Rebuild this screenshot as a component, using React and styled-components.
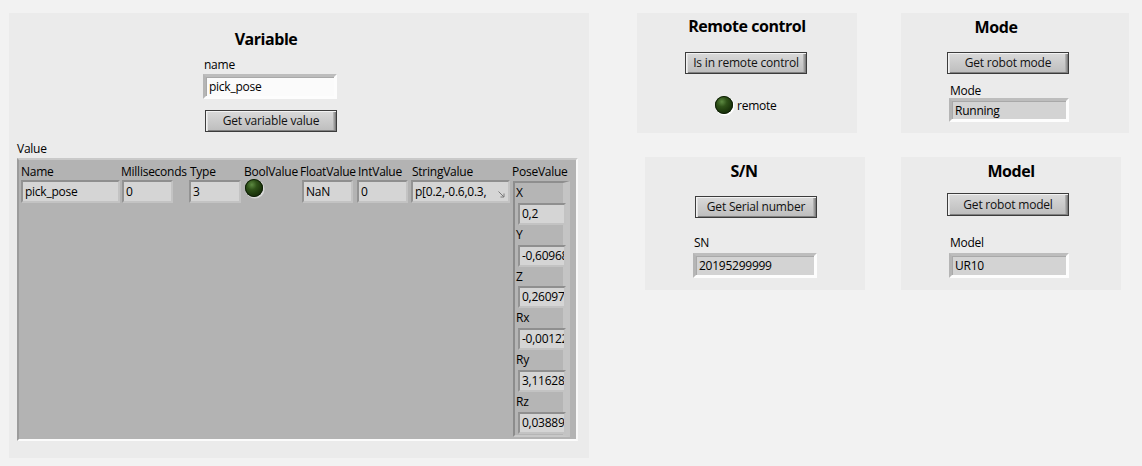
import React from 'react';
import styled, { createGlobalStyle } from 'styled-components';

const Global = createGlobalStyle`
  html, body { margin: 0; padding: 0; background: #f2f2f2; }
  body {
    font-family: "Open Sans", "Noto Sans", sans-serif;
    font-size: 12px;
    letter-spacing: -0.25px;
    color: #000;
  }
`;

const Page = styled.div`
  display: flex;
  align-items: flex-start;
  width: 1142px;
  height: 466px;
  box-sizing: border-box;
  padding: 13px 0 0 9px;
  background: #f2f2f2;
  overflow: hidden;
`;

const Card = styled.section`
  flex: none;
  display: flex;
  flex-direction: column;
  align-items: flex-start;
  box-sizing: border-box;
  width: ${p => p.$w}px;
  height: ${p => p.$h}px;
  margin-left: ${p => p.$ml || 0}px;
  padding-left: ${p => p.$pl || 0}px;
  background: #ebebeb;
`;

const Stack = styled.div`
  display: flex;
  flex-direction: column;
  align-items: flex-start;
  width: ${p => p.$w}px;
  margin-left: ${p => p.$ml || 0}px;
`;

const Title = styled.h2`
  align-self: stretch;
  margin: ${p => p.$mt || 0}px 0 0 0;
  box-sizing: border-box;
  ${p => (p.$dx > 0 ? `padding-left: ${2 * p.$dx}px;` : `padding-right: ${-2 * (p.$dx || 0)}px;`)}
  font-size: 16px;
  line-height: 20px;
  font-weight: 700;
  letter-spacing: -0.45px;
  text-align: center;
  white-space: nowrap;
`;

const Label = styled.div`
  margin-top: ${p => p.$mt || 0}px;
  margin-left: ${p => p.$ml || 0}px;
  line-height: 16px;
  white-space: nowrap;
`;

const Button = styled.button`
  flex: none;
  width: ${p => p.$w}px;
  height: ${p => p.$h || 22}px;
  margin-top: ${p => p.$mt || 0}px;
  margin-left: ${p => p.$ml || 0}px;
  padding: 0;
  box-sizing: border-box;
  border: 1px solid #3c3c3c;
  background: linear-gradient(#dadada, #cbcbcb 50%, #bdbdbd);
  box-shadow:
    inset 1px 1px 0 #f2f2f2,
    inset 2px 0 0 #e2e2e2,
    inset -1px -1px 0 #808080,
    inset -2px 0 0 #999,
    inset -3px 0 0 #b0b0b0;
  font-family: inherit;
  font-size: 12px;
  letter-spacing: -0.2px;
  line-height: 18px;
  color: #111;
  white-space: nowrap;
`;

const Display = styled.div`
  flex: none;
  display: flex;
  align-items: center;
  box-sizing: border-box;
  width: ${p => p.$w}px;
  height: ${p => p.$h || 24}px;
  margin-top: ${p => p.$mt || 0}px;
  margin-left: ${p => p.$ml || 0}px;
  padding-left: 3px;
  background: ${p => (p.$control ? '#fbfbfb' : '#d3d3d3')};
  border-style: solid;
  border-width: 3px;
  border-color: #bdbdbd #fdfdfd #fdfdfd #b5b5b5;
  box-shadow: inset 1px 1px 0 #a9a9a9;
  white-space: nowrap;
`;

const Cluster = styled.div`
  flex: none;
  display: flex;
  align-items: flex-start;
  box-sizing: border-box;
  width: 561px;
  height: 283px;
  margin: 1px 0 0 8px;
  padding: 4px 0 0 2px;
  background: #b3b3b3;
  border-style: solid;
  border-width: 2px;
  border-color: #c9c9c9 #f8f8f8 #fbfbfb #9c9c9c;
`;

const Column = styled.div`
  flex: none;
  display: flex;
  flex-direction: column;
  align-items: flex-start;
  width: ${p => p.$w}px;
`;

const ColLabel = styled.div`
  margin-left: ${p => p.$ml || 0}px;
  line-height: 16px;
  height: 16px;
  white-space: nowrap;
`;

const Cell = styled.div`
  position: relative;
  flex: none;
  box-sizing: border-box;
  width: ${p => p.$w}px;
  height: ${p => p.$h || 23}px;
  margin-left: ${p => p.$ml || 0}px;
  padding-left: 2px;
  background: #d5d5d5;
  border-style: solid;
  border-width: 2px;
  border-color: #8f8f8f #c3c3c3 #c3c3c3 #939393;
  line-height: ${p => (p.$h || 23) - 4}px;
  white-space: nowrap;
  overflow: hidden;
`;

const Led = styled.div`
  flex: none;
  width: 18px;
  height: 18px;
  margin-top: ${p => p.$mt || 0}px;
  margin-left: ${p => p.$ml || 0}px;
  border-radius: 50%;
  background: radial-gradient(circle at 38% 32%, #5d8a42 0%, #2f5219 30%, #1c360c 62%, #102206 100%);
  box-shadow: inset 0 0 0 1px #0f1f07, 1px 1px 0 0.5px ${p => p.$rim || '#ffffff'};
`;

const LedRow = styled.div`
  display: flex;
  align-items: center;
  gap: 4px;
  margin-top: ${p => p.$mt || 0}px;
  margin-left: ${p => p.$ml || 0}px;
`;

const Resize = styled.svg`
  position: absolute;
  right: 3px;
  bottom: 3px;
`;

const PoseCluster = styled.div`
  flex: none;
  display: flex;
  flex-direction: column;
  box-sizing: border-box;
  width: 57px;
  height: 256px;
  margin: 1px 0 0 1px;
  padding-left: 1px;
  background: #b5b5b5;
  border-style: solid;
  border-width: 2px 7px 2px 2px;
  border-color: #8e8e8e #c4c4c4 #c8c8c8 #8c8c8c;
`;

const PoseLabel = styled.div`
  height: 19.75px;
  line-height: 20px;
  white-space: nowrap;
`;

const Row = styled.div`
  display: flex;
  align-items: flex-start;
  margin-top: ${p => p.$mt || 0}px;
`;

const RightArea = styled.div`
  display: flex;
  flex-direction: column;
  margin-left: 48px;
`;

const columns = [
  { label: 'Name', w: 100, field: { ml: 0, w: 99, v: 'pick_pose' } },
  { label: 'Milliseconds', w: 69, field: { ml: 1, w: 51, v: '0' } },
  { label: 'Type', w: 54, field: { ml: -1, w: 52, v: '3' } },
  { label: 'BoolValue', w: 56, led: true },
  { label: 'FloatValue', w: 57, field: { ml: 2, w: 51, v: 'NaN' } },
  { label: 'IntValue', w: 54, lml: 1, field: { ml: 0, w: 51, v: '0' } },
  { label: 'StringValue', w: 101, lml: 1, field: { ml: 0, w: 99, v: 'p[0.2,-0.6,0.3,', resize: true } },
];

const pose = [
  ['X', '0,2'],
  ['Y', '-0,60968'],
  ['Z', '0,26097'],
  ['Rx', '-0,00122'],
  ['Ry', '3,11628'],
  ['Rz', '0,03889'],
];

function ValueCluster() {
  return (
    <Cluster>
      {columns.map(c => (
        <Column key={c.label} $w={c.w}>
          <ColLabel $ml={c.lml}>{c.label}</ColLabel>
          {c.led ? (
            <Led $ml={1} $mt={-1} $rim="#d8d8d8" />
          ) : (
            <Cell $ml={c.field.ml} $w={c.field.w}>
              {c.field.v}
              {c.field.resize && (
                <Resize width="7" height="7" viewBox="0 0 7 7">
                  <path d="M0.5 0.5 L6 6 M6 2.5 V6 H2.5" stroke="#7a7a7a" strokeWidth="1" fill="none" />
                </Resize>
              )}
            </Cell>
          )}
        </Column>
      ))}
      <Column $w={62}>
        <ColLabel>PoseValue</ColLabel>
        <PoseCluster>
          {pose.map(([k, v]) => (
            <React.Fragment key={k}>
              <PoseLabel>{k}</PoseLabel>
              <Cell $ml={2} $w={48} $h={22}>{v}</Cell>
            </React.Fragment>
          ))}
        </PoseCluster>
      </Column>
    </Cluster>
  );
}

export default function App() {
  return (
    <>
      <Global />
      <Page>
        <Card $w={580} $h={445}>
          <Stack $ml={194} $w={134}>
            <Title $mt={16} $dx={-4}>Variable</Title>
            <Label $mt={8} $ml={1}>name</Label>
            <Display $control $mt={1} $w={134} $h={25}>pick_pose</Display>
            <Button $mt={11} $ml={2} $w={132}>Get variable value</Button>
          </Stack>
          <Label $mt={9} $ml={8}>Value</Label>
          <ValueCluster />
        </Card>

        <RightArea>
          <Row>
            <Card $w={220} $h={120}>
              <Title $mt={3}>Remote control</Title>
              <Button $mt={16} $ml={48} $w={122}>Is in remote control</Button>
              <LedRow $mt={22} $ml={78}>
                <Led />
                <span>remote</span>
              </LedRow>
            </Card>
            <Card $w={228} $h={120} $ml={44} $pl={46}>
              <Stack $w={122}>
                <Title $mt={4} $dx={-12}>Mode</Title>
                <Button $mt={15} $w={122}>Get robot mode</Button>
                <Label $mt={9} $ml={3}>Mode</Label>
                <Display $mt={-1} $ml={2} $w={120} $h={24}>Running</Display>
              </Stack>
            </Card>
          </Row>
          <Row $mt={24}>
            <Card $w={220} $h={133} $ml={8} $pl={50}>
              <Stack $w={122}>
                <Title $mt={4} $dx={-12}>S/N</Title>
                <Button $mt={15} $w={122}>Get Serial number</Button>
                <Label $mt={17} $ml={-1}>SN</Label>
                <Display $mt={2} $ml={-2} $w={124} $h={25}>20195299999</Display>
              </Stack>
            </Card>
            <Card $w={220} $h={133} $ml={36} $pl={46}>
              <Stack $w={122}>
                <Title $mt={4} $dx={3}>Model</Title>
                <Button $mt={12} $w={122} $h={23}>Get robot model</Button>
                <Label $mt={19} $ml={3}>Model</Label>
                <Display $mt={2} $ml={2} $w={120} $h={25}>UR10</Display>
              </Stack>
            </Card>
          </Row>
        </RightArea>
      </Page>
    </>
  );
}
